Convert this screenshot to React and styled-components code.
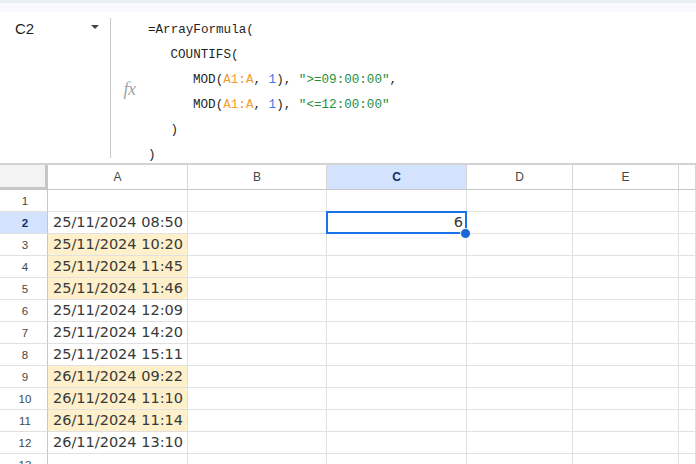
import React from 'react';
import styled, { createGlobalStyle } from 'styled-components';

const GlobalStyle = createGlobalStyle`
  html, body {
    margin: 0;
    padding: 0;
    background: #ffffff;
    overflow: hidden;
  }
  body {
    font-family: 'Liberation Sans', Arial, sans-serif;
  }
`;

const Page = styled.div`
  width: 696px;
  height: 464px;
  overflow: hidden;
  background: #fff;
`;

const TopStrip = styled.div`
  height: 9px;
  border-top: 3px solid #eaeff3;
  background: #f8fafd;
`;

const FormulaBar = styled.div`
  display: flex;
  height: 151px;
  overflow: hidden;
`;

const NameBox = styled.div`
  width: 111px;
  flex: none;
  display: flex;
  align-items: flex-start;
  justify-content: space-between;
  padding: 1px 11px 0 15px;
  box-sizing: border-box;
  border-right: 1px solid #c7c7c7;
  margin: 6px 0 5px;
  height: 140px;
`;

const NameText = styled.span`
  font-size: 15px;
  color: #1f1f1f;
  line-height: 19px;
`;

const Caret = styled.span`
  width: 0;
  height: 0;
  margin-top: 6px;
  border-left: 4px solid transparent;
  border-right: 4px solid transparent;
  border-top: 4px solid #444746;
`;

const FxZone = styled.div`
  width: 37px;
  flex: none;
  display: flex;
  align-items: center;
  justify-content: center;
  padding-top: 4px;
  font-family: 'Liberation Serif', 'Times New Roman', serif;
  font-style: italic;
  font-size: 18px;
  color: #a0a4a8;
  letter-spacing: -0.5px;
`;

const Formula = styled.div`
  padding-top: 6px;
  font-family: 'Liberation Mono', 'DejaVu Sans Mono', monospace;
  font-size: 12.6px;
  color: #1f1f1f;
`;

const Line = styled.div`
  height: 25px;
  line-height: 25px;
  white-space: pre;
  padding-left: ${(p) => p.$indent * 22.5}px;
`;

const Ref = styled.span`
  color: #f29d2d;
`;
const Num = styled.span`
  color: #3b78e7;
`;
const Str = styled.span`
  color: #1f8e3d;
`;

const Grid = styled.div`
  display: grid;
  grid-template-columns: 48px 140px 139px 140px 106px 106px 1fr;
  grid-template-rows: 25px repeat(13, 22px);
  border-top: 2px solid #d3d3d3;
`;

const Corner = styled.div`
  background: #f3f3f3;
  border-right: 3px solid #c6c6c6;
  border-bottom: 3px solid #c6c6c6;
`;

const ColHead = styled.div`
  display: flex;
  align-items: center;
  justify-content: center;
  font-size: 12px;
  color: ${(p) => (p.$active ? '#0b2e6b' : '#444746')};
  font-weight: ${(p) => (p.$active ? 700 : 400)};
  background: ${(p) => (p.$active ? '#d3e3fd' : '#fff')};
  border-right: 1px solid #d5d5d5;
  border-bottom: 1px solid #c7c7c7;
`;

const RowHead = styled.div`
  display: flex;
  align-items: center;
  justify-content: center;
  font-size: 11.5px;
  color: ${(p) => (p.$active ? '#0b2e6b' : '#444746')};
  font-weight: ${(p) => (p.$active ? 700 : 400)};
  background: ${(p) => (p.$active ? '#d3e3fd' : '#fff')};
  border-right: 1px solid #c7c7c7;
  border-bottom: 1px solid #e1e1e1;
  padding-left: 3px;
`;

const Cell = styled.div`
  position: relative;
  display: flex;
  align-items: flex-end;
  justify-content: ${(p) => (p.$right ? 'flex-end' : 'flex-start')};
  padding: 0 3px 1px 5px;
  font-family: 'DejaVu Sans', Verdana, sans-serif;
  font-size: 14.5px;
  line-height: 19px;
  color: #383838;
  white-space: nowrap;
  background: ${(p) => (p.$fill ? '#fdf0cb' : '#fff')};
  border-right: 1px solid #e1e1e1;
  border-bottom: 1px solid #e1e1e1;

  ${(p) =>
    p.$selected &&
    `
    &::after {
      content: '';
      position: absolute;
      left: -1px;
      top: -1px;
      right: -1px;
      bottom: -1px;
      border: 2px solid #1a73e8;
      pointer-events: none;
    }
  `}
`;

const Handle = styled.span`
  position: absolute;
  right: -5px;
  bottom: -6px;
  width: 9px;
  height: 9px;
  border-radius: 50%;
  background: #1a66d9;
  border: 1px solid #fff;
  z-index: 2;
`;

const columns = ['A', 'B', 'C', 'D', 'E', ''];

const values = [
  null,
  '25/11/2024 08:50',
  '25/11/2024 10:20',
  '25/11/2024 11:45',
  '25/11/2024 11:46',
  '25/11/2024 12:09',
  '25/11/2024 14:20',
  '25/11/2024 15:11',
  '26/11/2024 09:22',
  '26/11/2024 11:10',
  '26/11/2024 11:14',
  '26/11/2024 13:10',
  null,
];

const highlighted = [3, 4, 5, 9, 10, 11];

export default function App() {
  return (
    <Page>
      <GlobalStyle />
      <TopStrip />
      <FormulaBar>
        <NameBox>
          <NameText>C2</NameText>
          <Caret />
        </NameBox>
        <FxZone>fx</FxZone>
        <Formula>
          <Line $indent={0}>=ArrayFormula(</Line>
          <Line $indent={1}>COUNTIFS(</Line>
          <Line $indent={2}>
            MOD(<Ref>A1:A</Ref>, <Num>1</Num>), <Str>"&gt;=09:00:00"</Str>,
          </Line>
          <Line $indent={2}>
            MOD(<Ref>A1:A</Ref>, <Num>1</Num>), <Str>"&lt;=12:00:00"</Str>
          </Line>
          <Line $indent={1}>)</Line>
          <Line $indent={0}>)</Line>
        </Formula>
      </FormulaBar>
      <Grid>
        <Corner />
        {columns.map((c, i) => (
          <ColHead key={`h${i}`} $active={c === 'C'}>
            {c}
          </ColHead>
        ))}
        {values.map((v, r) => {
          const row = r + 1;
          return (
            <React.Fragment key={row}>
              <RowHead $active={row === 2}>{row}</RowHead>
              <Cell $fill={highlighted.includes(row)}>{v}</Cell>
              <Cell />
              {row === 2 ? (
                <Cell $right $selected>
                  6
                  <Handle />
                </Cell>
              ) : (
                <Cell />
              )}
              <Cell />
              <Cell />
              <Cell />
            </React.Fragment>
          );
        })}
      </Grid>
    </Page>
  );
}
